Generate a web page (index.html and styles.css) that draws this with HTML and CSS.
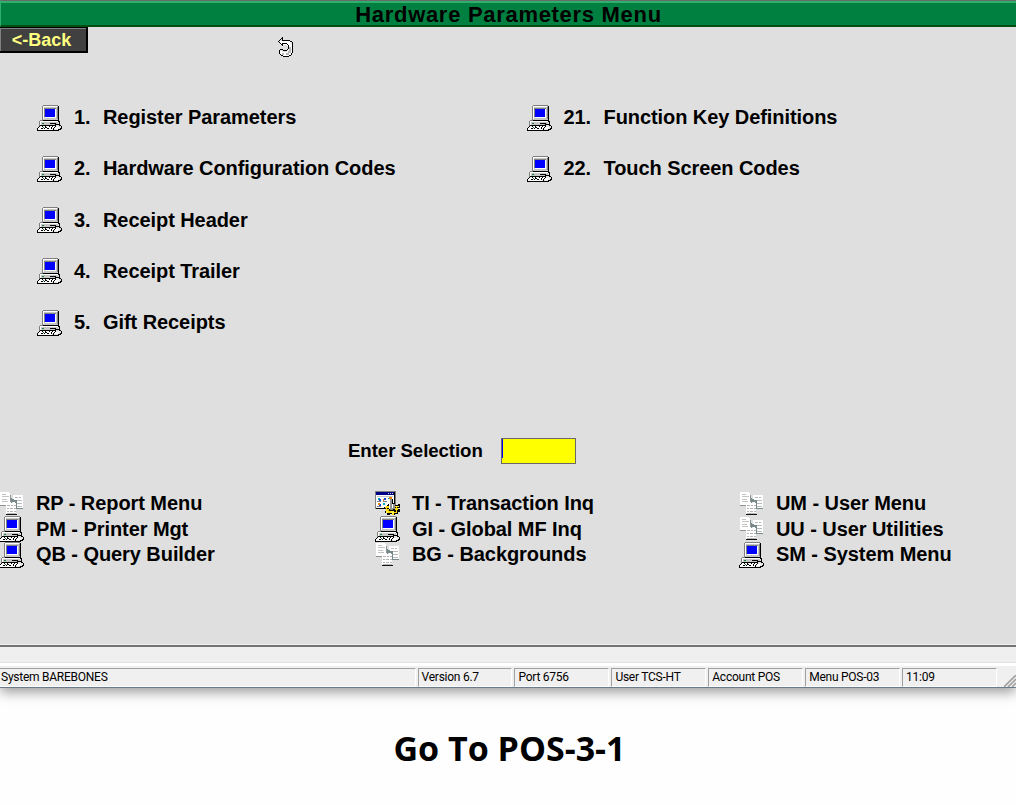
FILE: index.html
```html
<!DOCTYPE html>
<html lang="en">
<head>
<meta charset="utf-8">
<title>Hardware Parameters Menu</title>
<link rel="stylesheet" href="styles.css">
</head>
<body>
<svg class="defs" aria-hidden="true">
  <symbol id="pc" viewBox="0 0 25 26">
    <path fill="#808080" d="M6 0h15v1H6zM5 1h1v14H5z"/>
    <path fill="#c6c6c6" d="M6 1h16v14H6z"/>
    <path fill="#fff" d="M6 1h14v1H7v12H6zM18 4h1v9H8v-1h10z"/>
    <path fill="#808080" d="M7 3h12v1H8v8H7zM20 2h1v12h-1z"/>
    <path fill="#000" d="M21 1h1v14h-1v1H6v-1h15zM8 4h10v8H8z"/>
    <path fill="#00f" d="M8 4h10v8H8z"/>
    <path fill="#808080" d="M3 15h3v1H3zM2 16h1v5H2z"/>
    <path fill="#c6c6c6" d="M3 16h18v5H3z"/>
    <path fill="#fff" d="M3 16h18v1H3zM3 17h1v3H3z"/>
    <path fill="#000" d="M21 15h1v1h1v6h-1v-5h-1zM13 18h6v1h-6zM3 20h15v1H3z"/>
    <path fill="#fff" d="M3 21h15v1h-1v1h-1v1h-1v1H1v-2h1v-1h1z"/>
    <path fill="#000" d="M2 21h1v1H2zM1 22h1v1H1zM0 23h1v2H0zM0 25h18v1H0zM5 21h1v1H5zM8 21h1v1h1v1H8zM12 21h1v1h-1zM15 21h1v1h-1zM4 23h2v1H4zM7 23h1v1H7zM10 23h2v1h-2zM14 22h1v2h-1zM17 22h1v2h-1v1h-1v-2h1z"/>
    <path fill="#188038" d="M5 18h2v1H5zM6 22h1v1H6z"/>
    <path fill="#000" d="M18 19h5v1h1v1h1v3h-1v1h-2v1h-5v-1h-1v-2h2z"/>
    <path fill="#e6e6e6" d="M19 20h3v1h2v2h-1v1h-2v1h-4v-2h2z"/>
    <path fill="#fff" d="M18 22h4v1h-1v1h-3z"/>
  </symbol>
  <symbol id="docs" viewBox="0 0 25 26">
    <path fill="#fff" d="M1 1h9v1h1v12H1z"/>
    <path fill="#c4c4c4" d="M3 3h4v1H3zM3 5h7v1H3zM3 8h5v1H3zM3 10h6v1H3z"/>
    <path fill="#8c9494" d="M1 14h7v1H1zM11 4h1v9h-1z"/>
    <path fill="#fff" d="M14 4h10v14H14z"/>
    <path fill="#b7bbbb" d="M16 6h3v1h-3zM20 6h2v1h-2zM17 9h6v1h-6zM18 12h5v1h-5zM18 15h5v1h-5z"/>
    <path fill="#78898c" d="M13 8h2v1h3v9h-2v-7h-3zM12 7h1v5h-1zM18 17h6v1h-6z"/>
    <path fill="#fff" d="M7 11h5v1h5v12H7z"/>
    <path fill="#b5b5b5" d="M8 14h3v1H8zM12 14h2v1h-2zM15 14h2v1h-2zM8 17h2v1H8zM11 17h3v1h-3zM15 17h2v1h-2zM8 20h2v1H8zM11 20h3v1h-3zM15 20h2v1h-2zM8 22h9v1H8z"/>
    <path fill="#111" d="M7 23h11v1H7z"/>
  </symbol>
  <symbol id="trans" viewBox="0 0 25 26">
    <path fill="#808080" d="M0 0h21v18H0z"/>
    <path fill="#fff" d="M1 1h18v16H1z"/>
    <path fill="#000" d="M19 1h1v17H1v-1h18z"/>
    <path fill="#000084" d="M1 1h18v3H1z"/>
    <path fill="#c6c6c6" d="M13 2h1v1h-1zM15 2h1v1h-1zM17 2h1v1h-1zM2 5h16v1H2z"/>
    <path fill="#00a5b5" d="M3 7h2v2H3zM8 12h2v2H8zM13 7h2v1h-2z"/>
    <path fill="#1740dd" d="M4 8h2v2H4zM9 7h2v2H9zM4 13h2v2H4z"/>
    <path fill="#e08000" d="M3 12h2v2H3zM8 8h1v2H8zM14 6h3v2h-3z"/>
    <path fill="#808080" d="M2 10h4v1H2zM8 10h4v1H8zM2 15h4v1H2z"/>
    <path fill="#000" d="M14 12h3V8h1v4h2v2h3v-1h2v4h-2v1h2v3h-2v2h-3v1h-3v-1h-2v1h-3v-2h-2v-2h2v-2h-3v-2h3v-2h1z"/>
    <path fill="#ffd600" d="M11 15h3v2h-2v1h2v2h2v1h5v-2h-1v-2h2v-2h-3v1h2v1h2v2h-1v3h-3v2h-2v-2h-4v-2h-2v-3h-1z"/>
    <path fill="#ffef42" d="M16 20h3v3h-2v-1h-1zM21 15h3v1h-3zM11 20h2v2h-2z"/>
    <path fill="#909090" d="M15 8h2v7h1v4h-3zM18 13h2v5h-2z"/>
    <path fill="#fff" d="M14 8h1v10h-1zM17 13h1v4h-1z"/>
  </symbol>
</svg>

<div class="window">
  <header class="title">Hardware Parameters Menu</header>
  <main class="desk">
    <div class="toolbar">
      <button class="back">&lt;-Back</button>
      <svg class="cursor" width="16" height="21" viewBox="0 0 16 21" shape-rendering="crispEdges">
        <path fill="#fff" d="M2 4h2V2h1v1h5v1h2v1h1v2h1v9h-1v2h-2v1H4v-1H2v-4h2v1h5v-1h1V9H9V8H5v2H4V8H2V6H1V5h1z"/>
        <path fill="#b8b8b8" d="M11 10h2v6h-2v2H8v-2h2v-2h1zM4 16h2v2H4z"/>
        <path fill="#000" d="M4 0h1v3h5v1H4zM3 1h1v1H3zM2 2h1v1H2zM1 3h1v1H1zM0 4h1v1H0zM1 5h1v1H1zM2 6h1v1H2zM3 7h1v1H3zM4 6h1v3H4zM5 6h4v1H5zM9 7h1v1H9zM10 8h1v4h-1zM9 12h1v1H9zM5 13h4v1H5zM3 12h2v1H3zM1 13h1v4H1zM2 12h1v1H2zM2 17h1v1H2zM3 18h2v1H3zM5 19h6v1H5zM11 18h2v1h-2zM13 16h1v2h-1zM14 5h1v11h-1zM12 4h2v1h-2zM10 3h2v1h-2z"/>
      </svg>
    </div>

    <div class="choices">
      <ul class="col">
        <li><svg class="icon"><use href="#pc"/></svg><span class="num">1.</span><span>Register Parameters</span></li>
        <li><svg class="icon"><use href="#pc"/></svg><span class="num">2.</span><span>Hardware Configuration Codes</span></li>
        <li><svg class="icon"><use href="#pc"/></svg><span class="num">3.</span><span>Receipt Header</span></li>
        <li><svg class="icon"><use href="#pc"/></svg><span class="num">4.</span><span>Receipt Trailer</span></li>
        <li><svg class="icon"><use href="#pc"/></svg><span class="num">5.</span><span>Gift Receipts</span></li>
      </ul>
      <ul class="col wide">
        <li><svg class="icon"><use href="#pc"/></svg><span class="num">21.</span><span>Function Key Definitions</span></li>
        <li><svg class="icon"><use href="#pc"/></svg><span class="num">22.</span><span>Touch Screen Codes</span></li>
      </ul>
    </div>

    <div class="entry">
      <span class="entry-label">Enter Selection</span>
      <div class="field"><span class="caret"></span></div>
    </div>

    <div class="shortcuts">
      <ul class="short">
        <li><svg class="icon"><use href="#docs"/></svg><span>RP - Report Menu</span></li>
        <li><svg class="icon"><use href="#pc"/></svg><span>PM - Printer Mgt</span></li>
        <li><svg class="icon"><use href="#pc"/></svg><span>QB - Query Builder</span></li>
      </ul>
      <ul class="short">
        <li><svg class="icon"><use href="#trans"/></svg><span>TI - Transaction Inq</span></li>
        <li><svg class="icon"><use href="#pc"/></svg><span>GI - Global MF Inq</span></li>
        <li><svg class="icon"><use href="#docs"/></svg><span>BG - Backgrounds</span></li>
      </ul>
      <ul class="short">
        <li><svg class="icon"><use href="#docs"/></svg><span>UM - User Menu</span></li>
        <li><svg class="icon"><use href="#docs"/></svg><span>UU - User Utilities</span></li>
        <li><svg class="icon"><use href="#pc"/></svg><span>SM - System Menu</span></li>
      </ul>
    </div>
  </main>
  <div class="message"></div>
  <footer class="status">
    <span class="cell system">System BAREBONES</span>
    <span class="cell">Version 6.7</span>
    <span class="cell">Port 6756</span>
    <span class="cell">User TCS-HT</span>
    <span class="cell">Account POS</span>
    <span class="cell">Menu POS-03</span>
    <span class="cell">11:09</span>
    <svg class="grip" width="12" height="12" viewBox="0 0 12 12"><path d="M0 12L12 0M4 12L12 4M8 12L12 8" stroke="#a0a0a0" stroke-width="1.6"/></svg>
  </footer>
</div>
<p class="caption">Go To POS-3-1</p>
</body>
</html>
```
FILE: styles.css
```css
* { box-sizing: border-box; }
body {
  margin: 0;
  height: 805px;
  overflow: hidden;
  background: #fefefe;
  color: #000;
  font-family: "Liberation Sans", Arial, sans-serif;
}
ul { margin: 0; padding: 0; list-style: none; }
.defs { display: none; }
.window {
  width: 1016px;
  height: 688px;
  display: flex;
  flex-direction: column;
  background: #f0f0f0;
  border-bottom: 1px solid #6c7b8a;
  box-shadow: 0 4px 12px rgba(0, 0, 0, 0.4);
}
.title {
  height: 27px;
  flex: none;
  border-top: 1px solid #696969;
  border-bottom: 2px solid #004f14;
  border-left: 1px solid #2fae6c;
  box-shadow: inset 0 2px #2fae6c;
  background: #008040;
  text-align: center;
  padding-top: 1px;
  font-size: 22px;
  font-weight: bold;
  line-height: 25px;
  letter-spacing: 0.7px;
  white-space: nowrap;
}
.desk {
  height: 618px;
  flex: none;
  background: #dfdfdf;
  font-size: 20px;
  font-weight: bold;
  letter-spacing: -0.07px;
  border-bottom: 1px solid #f0f0f0;
}
.toolbar { height: 65px; display: flex; align-items: flex-start; }
.back {
  width: 88px;
  height: 26px;
  padding: 0 3px 0 0;
  border: 0 solid #000;
  border-width: 1px 2px 2px 0;
  box-shadow: inset 1px 1px #808080;
  background: #404040;
  color: #ffff80;
  font: bold 18px/22px "Liberation Sans", Arial, sans-serif;
}
.cursor { margin: 10px 0 0 190px; }
.choices { display: flex; height: 319px; padding: 0 0 0 37px; }
.col { width: 514px; }
.col li { display: flex; align-items: center; height: 51.25px; white-space: nowrap; }
.icon { width: 25px; height: 26px; flex: none; shape-rendering: crispEdges; }
.num { width: 29px; margin-left: 12px; }
.wide .num { width: 40px; }
.entry { display: flex; align-items: center; height: 80px; padding-left: 348px; }
.entry-label { width: 153px; font-size: 18.67px; letter-spacing: -0.07px; }
.field {
  width: 75px;
  height: 26px;
  border: 1px solid #696969;
  background: #ff0;
}
.caret { display: block; width: 1px; height: 19px; background: #00f; }
.shortcuts { display: grid; grid-template-columns: 376px 364px 1fr; margin-left: -1px; }
.short li { display: flex; align-items: center; height: 25.6px; gap: 12px; white-space: nowrap; }
.message {
  height: 21px;
  flex: none;
  border-top: 2px solid #696969;
  border-top-color: #747474;
  border-bottom: 3px solid #fff;
  box-shadow: inset 0 -1px #e3e3e3;
  background: #efefef;
}
.status {
  flex: 1;
  display: flex;
  gap: 2px;
  padding: 2px 0 0;
  font: 12px/17px Roboto, sans-serif;
}
.cell {
  width: 95px;
  height: 19px;
  padding-left: 3px;
  border: 1px solid #a0a0a0;
  border-right-color: #fff;
  border-bottom-color: #fff;
  white-space: nowrap;
  letter-spacing: -0.25px;
}
.system { width: 416px; padding-left: 1px; border-left: 0; }
.grip { align-self: flex-end; margin-left: 5px; flex: none; }
.caption {
  margin: 37px 0 0;
  padding-left: 3px;
  text-align: center;
  font: bold 34px/46px "Open Sans", "Noto Sans", sans-serif;
}
```
